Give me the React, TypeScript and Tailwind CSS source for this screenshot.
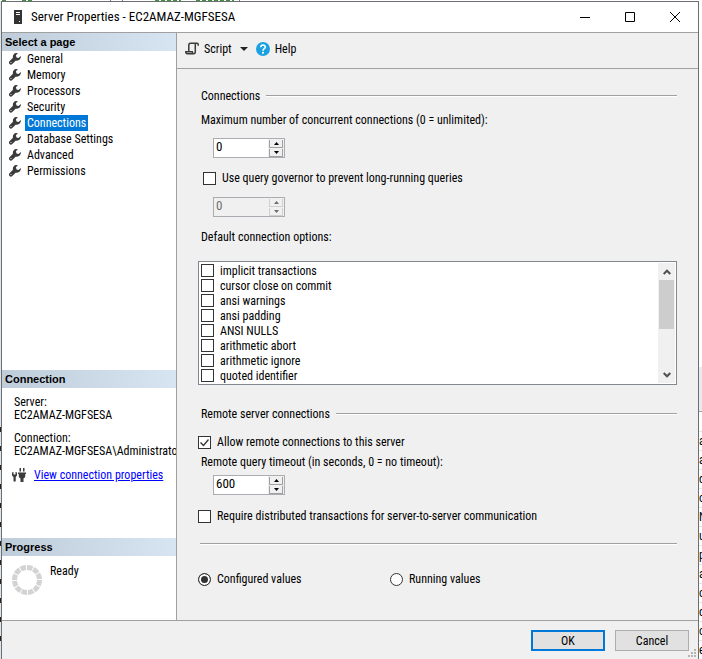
import { useState } from "react";

const pages = [
    "General",
    "Memory",
    "Processors",
    "Security",
    "Connections",
    "Database Settings",
    "Advanced",
    "Permissions",
];

const connectionOptions = [
    "implicit transactions",
    "cursor close on commit",
    "ansi warnings",
    "ansi padding",
    "ANSI NULLS",
    "arithmetic abort",
    "arithmetic ignore",
    "quoted identifier",
];

// Text of the window behind the dialog, only a sliver of each letter shows
const backgroundRows = ["a", "a", "de", "o", "N", "u", "p", "a", "oa", "c", "o", "er"];

function ServerIcon() {
    return (
        <svg width="10" height="14" viewBox="0 0 10 14" className="shrink-0" aria-hidden="true">
            <rect x="1" y="0" width="8" height="14" fill="#333" />
            <path d="M3 2.5h4M3 4.5h4" stroke="#fff" strokeWidth="1" />
            <rect x="6" y="11" width="1" height="1" fill="#fff" />
        </svg>
    );
}

function WrenchIcon() {
    return (
        <svg width="12" height="12" viewBox="0 0 12 12" className="shrink-0" aria-hidden="true">
            <path
                d="M8.800.2A3.700 3.700 0 0 0 4 4.700L.5 8.200a1.900 1.900 0 0 0 0 2.700 1.900 1.900 0 0 0 2.800 0L6.900 7.400A3.700 3.700 0 0 0 11.700 2.900L9.600 5 7.500 4.500 6.900 2.300Z"
                fill="#3b3b3b"
            />
            <circle cx="2" cy="9.500" r=".6" fill="#fff" />
        </svg>
    );
}

function ScriptIcon() {
    return (
        <svg width="14" height="13" viewBox="0 0 14 13" className="shrink-0" aria-hidden="true">
            <path
                d="M3.800 9V3.200Q3.800 1.200 5.500 1.200h6.700q1 0 1 1.200v1.400M10.300 1.500V9.800Q10.300 11.800 8.500 11.800H2.300Q.8 11.800.8 9.800H7.300Q7.300 11.500 8.500 11.800"
                fill="none"
                stroke="#3b3b3b"
                strokeWidth="1.500"
            />
        </svg>
    );
}

function HelpIcon() {
    return (
        <svg width="14" height="14" viewBox="0 0 14 14" className="shrink-0" aria-hidden="true">
            <circle cx="7" cy="7" r="7" fill="#1ba1e2" />
            <path
                d="M4.800 5.300C4.800 2.300 9.300 2.400 9.300 5.100 9.300 6.700 7 6.700 7 8.700"
                fill="none"
                stroke="#fff"
                strokeWidth="1.600"
            />
            <rect x="6" y="9.800" width="2" height="1.800" fill="#fff" />
        </svg>
    );
}

function PlugIcon() {
    return (
        <svg width="14" height="14" viewBox="0 0 14 14" className="shrink-0" aria-hidden="true">
            <path
                d="M0 4.500L1.500 4v2.500h2V4L5 4.500V7.500L3.700 9v4.500H1.500V9L0 7.500Z"
                fill="#3b3b3b"
            />
            <path
                d="M7.500 0h1.500v3.500h-1.500zM11 0h1.500v3.500H11zM6 4.500h8V6h-.800v3L11.500 10.500V14h-3v-3.500L6.800 9V6H6z"
                fill="#3b3b3b"
            />
        </svg>
    );
}

function ProgressRing() {
    return (
        <svg width="30" height="30" viewBox="0 0 30 30" className="shrink-0" aria-hidden="true">
            <circle
                cx="15"
                cy="15"
                r="12.500"
                fill="none"
                stroke="#d3d3d3"
                strokeWidth="5"
                pathLength="120"
                strokeDasharray="8.500 1.500"
            />
        </svg>
    );
}

function PanelHeader({ children }: { children: string }) {
    return (
        <h2 className="h-[18px] shrink-0 bg-linear-to-r from-[#bfcddb] to-[#d7e4f2] pl-[3px] font-['Liberation_Sans',Arial,sans-serif] text-[11px] leading-[18px] font-bold">
            {children}
        </h2>
    );
}

function Divider() {
    return <div className="h-[2px] flex-1 border-t border-[#a0a0a0] bg-white" />;
}

function SectionTitle({ children }: { children: string }) {
    return (
        <div className="flex items-center gap-[6px] pl-[3px]">
            <h3>{children}</h3>
            <Divider />
        </div>
    );
}

function CheckBox({ label, checked = false, className = "" }: { label: string; checked?: boolean; className?: string }) {
    return (
        <label className={`flex items-center gap-[6px] ${className}`}>
            <span className="relative flex h-[13px] w-[13px] shrink-0">
                <input
                    type="checkbox"
                    defaultChecked={checked}
                    className="peer h-[13px] w-[13px] appearance-none border border-[#333] bg-white"
                />
                <svg
                    viewBox="0 0 13 13"
                    className="pointer-events-none absolute inset-0 hidden peer-checked:block"
                    aria-hidden="true"
                >
                    <path d="M2.500 6.500l3 3 5-6" fill="none" stroke="#333" strokeWidth="1.300" />
                </svg>
            </span>
            {label}
        </label>
    );
}

function Radio({ label, checked = false }: { label: string; checked?: boolean }) {
    return (
        <label className="flex w-48 items-center gap-[6px]">
            <input
                type="radio"
                name="values"
                defaultChecked={checked}
                className="h-[13px] w-[13px] shrink-0 appearance-none rounded-full border border-[#333] bg-white checked:bg-[#333] checked:shadow-[inset_0_0_0_2px_white]"
            />
            {label}
        </label>
    );
}

function Spinner({ id, label, initial, disabled = false }: { id: string; label: string; initial: number; disabled?: boolean }) {
    const [value, setValue] = useState(initial);
    const buttonClass =
        "flex h-2 w-[14px] items-center justify-center border-x border-b border-[#a0a0a0] bg-[#f0f0f0] disabled:border-[#d0d0d0]";

    return (
        <div
            className={`ml-[15px] flex h-5 w-[72px] border border-[#abadb3] ${disabled ? "bg-[#f0f0f0] text-[#6d6d6d]" : "bg-white"}`}
        >
            <input
                id={id}
                aria-label={label}
                value={value}
                disabled={disabled}
                onChange={(e) => setValue(Number(e.target.value) || 0)}
                className="min-w-0 flex-1 pb-[2px] pl-[2px] text-[13px] outline-none"
            />
            <div className="flex w-4 flex-col gap-px bg-[#f0f0f0] pt-px pl-px">
                <button aria-label="Increase" disabled={disabled} onClick={() => setValue(value + 1)} className={buttonClass}>
                    <svg width="5" height="3" viewBox="0 0 5 3" aria-hidden="true">
                        <path d="M0 3L2.500 0 5 3z" fill="currentColor" />
                    </svg>
                </button>
                <button
                    aria-label="Decrease"
                    disabled={disabled}
                    onClick={() => setValue(Math.max(0, value - 1))}
                    className={buttonClass}
                >
                    <svg width="5" height="3" viewBox="0 0 5 3" aria-hidden="true">
                        <path d="M0 0h5L2.500 3z" fill="currentColor" />
                    </svg>
                </button>
            </div>
        </div>
    );
}

function TitleBar() {
    return (
        <header className="flex h-[31px] shrink-0 items-center border-b border-[#a0a0a0] bg-white pl-[11px]">
            <ServerIcon />
            <h1 className="flex-1 pl-2 text-[13px]">Server Properties - EC2AMAZ-MGFSESA</h1>
            <button aria-label="Minimize" className="flex w-[45px] justify-center">
                <svg width="10" height="10" viewBox="0 0 10 10" aria-hidden="true">
                    <path d="M0 5.500h10" stroke="#000" />
                </svg>
            </button>
            <button aria-label="Maximize" className="flex w-[45px] justify-center">
                <svg width="10" height="10" viewBox="0 0 10 10" aria-hidden="true">
                    <path d="M.5.5h9v9h-9z" fill="none" stroke="#000" />
                </svg>
            </button>
            <button aria-label="Close" className="flex w-[46px] justify-center">
                <svg width="10" height="10" viewBox="0 0 10 10" aria-hidden="true">
                    <path d="M0 0l10 10M10 0L0 10" stroke="#000" />
                </svg>
            </button>
        </header>
    );
}

function Sidebar() {
    const [active, setActive] = useState("Connections");

    return (
        <aside className="flex w-[175px] shrink-0 flex-col overflow-hidden border-r border-[#a0a0a0] bg-white">
            <PanelHeader>Select a page</PanelHeader>
            <nav className="flex-1">
                {pages.map((page) => (
                    <button
                        key={page}
                        onClick={() => setActive(page)}
                        className="flex h-4 w-full items-center gap-1 pl-[7px] text-left"
                    >
                        <WrenchIcon />
                        <span className={`h-4 px-[2px] leading-4 ${page === active ? "bg-[#0078d7] text-white" : ""}`}>{page}</span>
                    </button>
                ))}
            </nav>

            <PanelHeader>Connection</PanelHeader>
            <div className="h-[150px] shrink-0 pt-2 pl-3 leading-[13px] whitespace-nowrap">
                <p>Server:</p>
                <p>EC2AMAZ-MGFSESA</p>
                <p className="pt-[10px]">Connection:</p>
                <p>EC2AMAZ-MGFSESA\Administrator</p>
                <div className="-ml-[2px] flex items-center gap-2 pt-[10px]">
                    <PlugIcon />
                    <a href="#properties" className="text-[#0000ff] underline">
                        View connection properties
                    </a>
                </div>
            </div>

            <PanelHeader>Progress</PanelHeader>
            <div className="flex h-16 shrink-0 items-start gap-2 pt-[9px] pl-[10px]">
                <ProgressRing />
                <p className="leading-[13px]">Ready</p>
            </div>
        </aside>
    );
}

function OptionList() {
    return (
        <div className="mt-[17px] flex h-[124px] border border-[#828790] bg-white p-px">
            <ul className="flex-1 pl-px">
                {connectionOptions.map((option) => (
                    <li key={option}>
                        <CheckBox label={option} className="h-[15px]" />
                    </li>
                ))}
            </ul>
            <div className="flex w-[17px] flex-col items-center bg-[#f0f0f0]">
                <button aria-label="Scroll up" className="flex h-[17px] w-full items-center justify-center">
                    <svg width="8" height="6" viewBox="0 0 8 6" aria-hidden="true">
                        <path d="M.7 5L4 1.700 7.300 5" fill="none" stroke="#505050" strokeWidth="2" />
                    </svg>
                </button>
                <div className="h-[49px] w-[15px] bg-[#cdcdcd]" />
                <button aria-label="Scroll down" className="mt-auto flex h-[17px] w-full items-center justify-center">
                    <svg width="8" height="6" viewBox="0 0 8 6" aria-hidden="true">
                        <path d="M.7 1L4 4.300 7.300 1" fill="none" stroke="#505050" strokeWidth="2" />
                    </svg>
                </button>
            </div>
        </div>
    );
}

function ConnectionsPage() {
    return (
        <div className="pt-5 pr-[21px] pl-[21px] leading-[14px]">
            <SectionTitle>Connections</SectionTitle>
            <label htmlFor="max-connections" className="mt-[10px] block pl-[3px]">
                Maximum number of concurrent connections (0 = unlimited):
            </label>
            <div className="mt-[11px]">
                <Spinner id="max-connections" label="Maximum number of concurrent connections" initial={0} />
            </div>
            <CheckBox label="Use query governor to prevent long-running queries" className="mt-[13px] pl-[5px]" />
            <div className="mt-3">
                <Spinner id="governor" label="Query governor limit" initial={0} disabled />
            </div>
            <p className="mt-[13px] pl-[3px]">Default connection options:</p>
            <OptionList />

            <div className="mt-[22px]">
                <SectionTitle>Remote server connections</SectionTitle>
            </div>
            <CheckBox label="Allow remote connections to this server" checked className="mt-[14px]" />
            <label htmlFor="timeout" className="mt-[6px] block pl-[3px]">
                Remote query timeout (in seconds, 0 = no timeout):
            </label>
            <div className="mt-[6px]">
                <Spinner id="timeout" label="Remote query timeout" initial={600} />
            </div>
            <CheckBox label="Require distributed transactions for server-to-server communication" className="mt-[14px]" />
            <div className="mt-5 flex pl-[2px]">
                <Divider />
            </div>
            <div className="mt-[27px] flex">
                <Radio label="Configured values" checked />
                <Radio label="Running values" />
            </div>
        </div>
    );
}

function ResizeGrip() {
    return (
        <svg width="10" height="10" viewBox="0 0 10 10" className="absolute right-px bottom-0" aria-hidden="true">
            <path d="M7 0h2v2H7zM7 3h2v2H7zM4 3h2v2H4zM7 6h2v2H7zM4 6h2v2H4zM1 6h2v2H1z" fill="#b4b4b4" />
        </svg>
    );
}

// Bottom edge of the green code comment behind the dialog
function BackgroundTop() {
    return (
        <svg width="240" height="1" viewBox="0 0 240 1" className="block" aria-hidden="true">
            <path d="M2 .5h5M22 .5h12M155 .5h26M196 .5h38" stroke="#3f8f3f" strokeDasharray="4 2" />
            <path d="M110 .5h1M122 .5h1M239 .5h1" stroke="#777" />
        </svg>
    );
}

export default function App() {
    return (
        <div className="flex min-h-screen flex-col bg-white font-['Roboto_Condensed',Lato,Arial,sans-serif] text-[12px] text-black">
            <BackgroundTop />
            <div className="flex flex-1">
                <div className="flex w-px shrink-0 flex-col justify-end bg-[#dfe3ea] pb-2" aria-hidden="true">
                    {backgroundRows.map((_, i) => (
                        <div key={i} className="h-[19px] pt-1">
                            <div className="h-[5px] bg-[#222]" />
                        </div>
                    ))}
                </div>
                <main className="relative flex min-w-0 flex-1 flex-col border-x border-t border-[#6b6e73] bg-[#f0f0f0]">
                    <TitleBar />
                    <div className="flex flex-1">
                        <Sidebar />
                        <section className="min-w-0 flex-1">
                            <div className="flex h-[36px] items-center border-b border-[#a0a0a0] pb-1 pl-2">
                                <button className="flex items-center gap-[5px]">
                                    <ScriptIcon />
                                    Script
                                </button>
                                <button aria-label="Script options" className="px-2">
                                    <svg width="8" height="4" viewBox="0 0 8 4" aria-hidden="true">
                                        <path d="M0 0h8L4 4z" fill="#222" />
                                    </svg>
                                </button>
                                <button className="flex items-center gap-[5px]">
                                    <HelpIcon />
                                    Help
                                </button>
                            </div>
                            <ConnectionsPage />
                        </section>
                    </div>
                    <footer className="flex h-[39px] shrink-0 justify-end gap-[10px] border-t border-[#a0a0a0] pt-[9px] pr-[9px]">
                        <button className="h-[21px] w-[74px] border-2 border-[#0078d7] bg-[#e1e1e1] leading-[14px]">OK</button>
                        <button className="h-[21px] w-[74px] border border-[#adadad] bg-[#e1e1e1] leading-[14px]">Cancel</button>
                    </footer>
                    <ResizeGrip />
                </main>
                <div className="flex w-[3px] shrink-0 flex-col justify-end overflow-hidden" aria-hidden="true">
                    <div className="mb-[19px] h-[45px] border-b border-[#a0a0a0] bg-[#e9ebee]" />
                    {backgroundRows.map((row, i) => (
                        <span key={i} className="h-[19px] border-t border-[#e5e5e5] leading-[18px]">
                            {row}
                        </span>
                    ))}
                </div>
            </div>
        </div>
    );
}
